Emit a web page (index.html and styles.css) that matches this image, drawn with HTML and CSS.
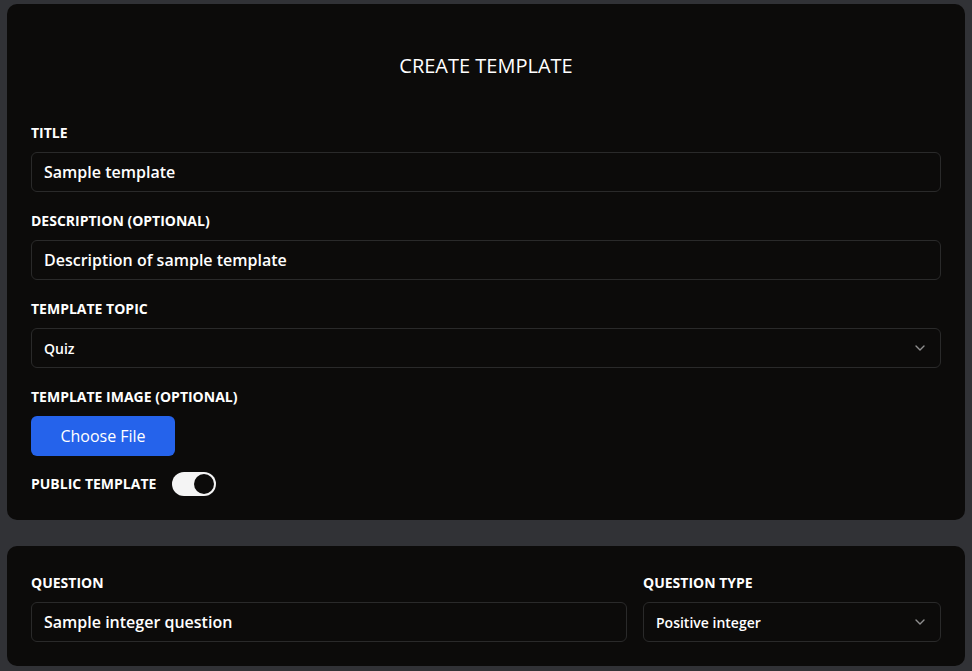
FILE: index.html
```html
<!DOCTYPE html>
<html>
<head>
<meta charset="utf-8">
<link rel="stylesheet" href="styles.css">
</head>
<body>
<div class="page">
  <section class="card">
    <h1 class="card-title">CREATE TEMPLATE</h1>
    <div class="field">
      <label class="label">TITLE</label>
      <div class="input">Sample template</div>
    </div>
    <div class="field">
      <label class="label">DESCRIPTION (OPTIONAL)</label>
      <div class="input">Description of sample template</div>
    </div>
    <div class="field">
      <label class="label">TEMPLATE TOPIC</label>
      <div class="input select">
        <span>Quiz</span>
        <svg class="chev" width="10" height="6" viewBox="0 0 10 6"><path d="M1 1l4 4 4-4" fill="none" stroke="#8f8f8f" stroke-width="1.4" stroke-linecap="round" stroke-linejoin="round"/></svg>
      </div>
    </div>
    <div class="field field-tight">
      <label class="label">TEMPLATE IMAGE (OPTIONAL)</label>
      <button class="btn">Choose File</button>
    </div>
    <div class="toggle-row">
      <span class="label-inline">PUBLIC TEMPLATE</span>
      <span class="toggle"><span class="knob"></span></span>
    </div>
  </section>

  <section class="card card-q">
    <div class="q-grid">
      <div class="qfield">
        <label class="label">QUESTION</label>
        <div class="input">Sample integer question</div>
      </div>
      <div class="qfield">
        <label class="label">QUESTION TYPE</label>
        <div class="input select">
          <span>Positive integer</span>
          <svg class="chev" width="10" height="6" viewBox="0 0 10 6"><path d="M1 1l4 4 4-4" fill="none" stroke="#8f8f8f" stroke-width="1.4" stroke-linecap="round" stroke-linejoin="round"/></svg>
        </div>
      </div>
    </div>
  </section>
</div>
</body>
</html>
```

FILE: styles.css
```css
* { box-sizing: border-box; }
html, body {
  margin: 0;
  padding: 0;
  background: #313236;
  font-family: "Open Sans", "Noto Sans", sans-serif;
  color: #ffffff;
}
.page {
  padding: 4px 7px 0 7px;
  display: flex;
  flex-direction: column;
  gap: 26px;
}
.card {
  background: #0c0b0a;
  border-radius: 10px;
  padding: 24px 24px 24px 24px;
}
.card-title {
  margin: 24px 0 44px 0;
  text-align: center;
  font-size: 20px;
  line-height: 28px;
  font-weight: 400;
  letter-spacing: 0;
}
.field {
  display: flex;
  flex-direction: column;
  margin-bottom: 20px;
}
.field-tight { margin-bottom: 16px; }
.label {
  display: block;
  font-size: 14px;
  line-height: 18px;
  font-weight: 700;
  margin-bottom: 10px;
}
.input {
  height: 40px;
  border: 1px solid #2a2a2a;
  border-radius: 6px;
  padding: 0 12px;
  display: flex;
  align-items: center;
  font-size: 16px;
  font-weight: 600;
}
.select {
  font-size: 14px;
  justify-content: space-between;
}
.chev { margin-right: 3px; }
.btn {
  align-self: flex-start;
  width: 144px;
  height: 40px;
  background: #2563eb;
  color: #fff;
  border: none;
  border-radius: 6px;
  font-family: inherit;
  font-size: 16px;
  font-weight: 400;
}
.toggle-row {
  display: flex;
  align-items: center;
  gap: 16px;
}
.label-inline {
  font-size: 14px;
  font-weight: 700;
  line-height: 18px;
}
.toggle {
  width: 44px;
  height: 24px;
  border-radius: 12px;
  background: #f4f4f4;
  display: flex;
  align-items: center;
  justify-content: flex-end;
  padding: 2px;
}
.knob {
  width: 20px;
  height: 20px;
  border-radius: 50%;
  background: #0c0b0a;
}
.card-q { padding-top: 28px; }
.q-grid {
  display: grid;
  grid-template-columns: 2fr 1fr;
  gap: 16px;
}
.qfield { display: flex; flex-direction: column; }
```
